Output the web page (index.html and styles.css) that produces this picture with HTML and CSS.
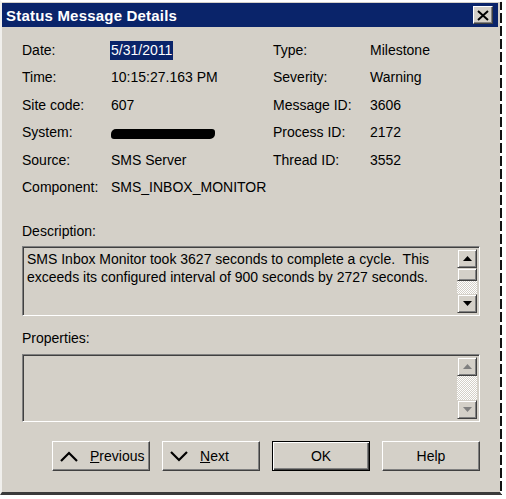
FILE: index.html
```html
<!DOCTYPE html>
<html>
<head>
<meta charset="utf-8">
<link rel="stylesheet" href="styles.css">
</head>
<body>
<div class="window">
  <div class="titlebar">
    <span class="title">Status Message Details</span>
    <span class="close">
      <svg width="12" height="11" viewBox="0 0 12 11"><path d="M1 1 L11 10 M11 1 L1 10" stroke="#000" stroke-width="2"/></svg>
    </span>
  </div>
  <div class="fields">
    <div class="lbl">Date:</div><div class="val"><span class="sel">5/31/2011</span></div>
    <div class="lbl">Type:</div><div class="val">Milestone</div>
    <div class="lbl">Time:</div><div class="val">10:15:27.163 PM</div>
    <div class="lbl">Severity:</div><div class="val">Warning</div>
    <div class="lbl">Site code:</div><div class="val">607</div>
    <div class="lbl">Message ID:</div><div class="val">3606</div>
    <div class="lbl">System:</div><div class="val"><span class="redact"></span></div>
    <div class="lbl">Process ID:</div><div class="val">2172</div>
    <div class="lbl">Source:</div><div class="val">SMS Server</div>
    <div class="lbl">Thread ID:</div><div class="val">3552</div>
    <div class="lbl">Component:</div><div class="val">SMS_INBOX_MONITOR</div>
    <div class="lbl"></div><div class="val"></div>
  </div>
  <div class="section-label desc-label">Description:</div>
  <div class="box desc-box">
    <div class="box-text">SMS Inbox Monitor took 3627 seconds to complete a cycle.  This<br>exceeds its configured interval of 900 seconds by 2727 seconds.</div>
    <div class="scrollbar">
      <div class="sbtn"><svg width="9" height="5" viewBox="0 0 9 5"><path d="M4.5 0 L9 5 L0 5 Z" fill="#000"/></svg></div>
      <div class="thumb"></div>
      <div class="track"></div>
      <div class="sbtn"><svg width="9" height="5" viewBox="0 0 9 5"><path d="M0 0 L9 0 L4.5 5 Z" fill="#000"/></svg></div>
    </div>
  </div>
  <div class="section-label props-label">Properties:</div>
  <div class="box props-box">
    <div class="box-text"></div>
    <div class="scrollbar">
      <div class="sbtn"><svg width="9" height="5" viewBox="0 0 9 5"><path d="M4.5 0 L9 5 L0 5 Z" fill="#808080"/></svg></div>
      <div class="track"></div>
      <div class="sbtn"><svg width="9" height="5" viewBox="0 0 9 5"><path d="M0 0 L9 0 L4.5 5 Z" fill="#808080"/></svg></div>
    </div>
  </div>
  <div class="buttons">
    <div class="btn btn-icon">
      <svg width="18" height="11" viewBox="0 0 18 11"><path d="M1 10 L9 2 L17 10" fill="none" stroke="#000" stroke-width="2.2"/></svg>
      <span><u>P</u>revious</span>
    </div>
    <div class="btn btn-icon">
      <svg width="18" height="11" viewBox="0 0 18 11"><path d="M1 1 L9 9 L17 1" fill="none" stroke="#000" stroke-width="2.2"/></svg>
      <span><u>N</u>ext</span>
    </div>
    <div class="btn btn-default">OK</div>
    <div class="btn">Help</div>
  </div>
</div>
</body>
</html>
```
FILE: styles.css
```css
html, body {
  margin: 0;
  padding: 0;
  background: #ffffff;
}
body {
  font-family: "Liberation Sans", Arial, sans-serif;
  font-size: 14px;
  color: #000;
}
.window {
  width: 502px;
  height: 495px;
  box-sizing: border-box;
  background:
    linear-gradient(#d4d0c8, #d4d0c8) padding-box,
    repeating-linear-gradient(to bottom, #111 0 10px, #fff 10px 13px) right top / 2px 100% no-repeat border-box,
    #f0efec;
  border-left: 2px solid #f0efec;
  border-top: 2px solid #ffffff;
  border-right: 2px solid transparent;
  border-bottom: 3px solid #3a3a3a;
  padding: 1px 2px 0 0;
  display: flex;
  flex-direction: column;
}
.titlebar {
  height: 24px;
  background: #0a246a;
  display: flex;
  align-items: center;
  justify-content: space-between;
  padding: 0 5px 0 4px;
  flex-shrink: 0;
}
.title {
  color: #fff;
  font-weight: bold;
  font-size: 15px;
  letter-spacing: 0.2px;
}
.close {
  width: 18px;
  height: 16px;
  background: #d4d0c8;
  border: 1px solid;
  border-color: #fff #404040 #404040 #fff;
  box-shadow: inset -1px -1px #808080;
  display: flex;
  align-items: center;
  justify-content: center;
}
.fields {
  margin-top: 9px;
  padding-left: 20px;
  display: grid;
  grid-template-columns: 89px 162px 97px auto;
  grid-auto-rows: 27.5px;
  align-items: center;
}
.sel {
  background: #0a246a;
  color: #fff;
  padding: 1px 1px 2px 1px;
  margin-left: -1px;
}
.redact {
  display: inline-block;
  width: 104px;
  height: 10px;
  background: #000;
  border-radius: 5px 3px 5px 3px;
  vertical-align: middle;
}
.section-label {
  padding-left: 20px;
  line-height: 16px;
}
.desc-label {
  margin-top: 22px;
}
.props-label {
  margin-top: 14px;
}
.box {
  margin-left: 20px;
  width: 458px;
  box-sizing: border-box;
  border: 1px solid;
  border-color: #808080 #ffffff #ffffff #808080;
  box-shadow: inset 1px 1px #404040, inset -1px -1px #d4d0c8;
  padding: 2px 2px 2px 2px;
  display: flex;
  background: #d4d0c8;
}
.desc-box {
  margin-top: 7px;
  height: 70px;
}
.props-box {
  margin-top: 8px;
  height: 68px;
}
.box-text {
  flex: 1;
  padding: 1px 0 0 2px;
  line-height: 18px;
  white-space: pre-wrap;
}
.scrollbar {
  width: 20px;
  display: flex;
  flex-direction: column;
}
.sbtn, .thumb {
  box-sizing: border-box;
  background: #d4d0c8;
  border: 1px solid;
  border-color: #d4d0c8 #404040 #404040 #d4d0c8;
  box-shadow: inset 1px 1px #fff, inset -1px -1px #808080;
}
.sbtn {
  height: 19px;
  display: flex;
  align-items: center;
  justify-content: center;
  flex-shrink: 0;
}
.thumb {
  height: 13px;
  flex-shrink: 0;
}
.track {
  flex: 1;
  background: repeating-conic-gradient(#ffffff 0% 25%, #d4d0c8 0% 50%) 0 0 / 2px 2px;
}
.buttons {
  margin-top: 19px;
  padding-left: 50px;
  display: flex;
  gap: 12px;
}
.btn {
  width: 98px;
  height: 30px;
  box-sizing: border-box;
  background: #d4d0c8;
  border: 1px solid;
  border-color: #fff #404040 #404040 #fff;
  box-shadow: inset -1px -1px #808080;
  display: flex;
  align-items: center;
  justify-content: center;
  font-size: 14px;
}
.btn-icon {
  justify-content: flex-start;
  padding-left: 7px;
  gap: 12px;
}
.btn-default {
  border: 1px solid #000;
  box-shadow: inset 1px 1px #fff, inset -1px -1px #404040, inset -2px -2px #808080;
}
```
